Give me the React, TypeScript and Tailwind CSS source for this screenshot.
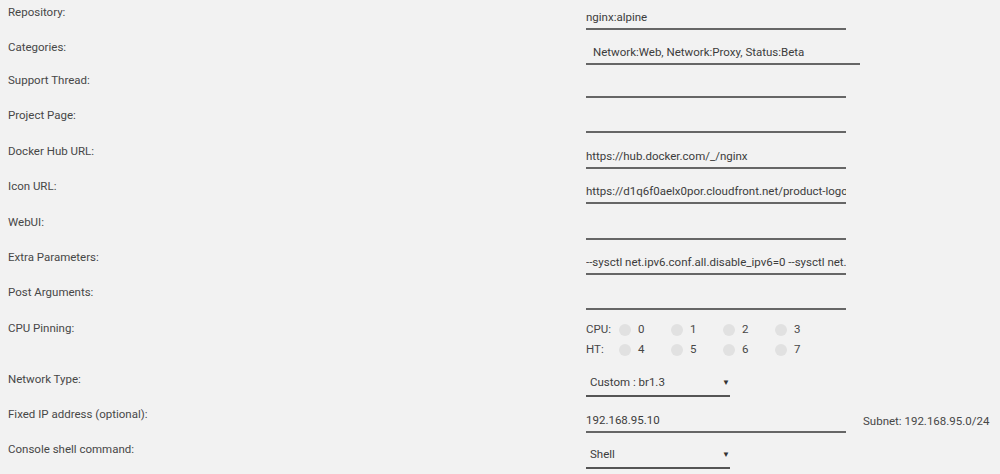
import type { ReactNode } from "react";

const font = { fontFamily: 'Roboto, "Noto Sans", sans-serif' };

// one label/value line of the template form
const Row = ({
  label,
  className,
  children,
}: {
  label: string;
  className: string;
  children?: ReactNode;
}) => (
  <div className={`flex ${className}`}>
    <div className="w-[586px] shrink-0 pl-[8px] pt-[4px] leading-[16px]">{label}</div>
    <div className="flex-1">{children}</div>
  </div>
);

const TextField = ({ value = "", wide = false }: { value?: string; wide?: boolean }) => (
  <input
    readOnly
    value={value}
    className={`block mt-[6px] h-[24px] p-0 bg-transparent border-0 border-b-2 border-[#666666] text-[#3c3c3c] text-[11.5px] outline-none ${
      wide ? "w-[274px] pl-[7px]" : "w-[260px]"
    }`}
    style={font}
  />
);

const SelectBox = ({ value }: { value: string }) => (
  <div className="flex items-center justify-between w-[144px] h-[26px] pl-[4px] pr-0 border-b-2 border-[#555555] text-[#3c3c3c]">
    <span>{value}</span>
    <span className="text-[8px] text-[#333333]">▼</span>
  </div>
);

const cpuRows = [
  { name: "CPU:", cores: [0, 1, 2, 3] },
  { name: "HT:", cores: [4, 5, 6, 7] },
];

export default function App() {
  return (
    <div className="min-h-screen w-full bg-[#f2f2f2] text-[#474747] text-[11.5px]" style={font}>
      <Row label="Repository:" className="h-[35px]">
        <TextField value="nginx:alpine" />
      </Row>
      <Row label="Categories:" className="h-[33px]">
        <TextField value="Network:Web, Network:Proxy, Status:Beta" wide />
      </Row>
      <Row label="Support Thread:" className="h-[35.4px]">
        <TextField />
      </Row>
      <Row label="Project Page:" className="h-[35.4px]">
        <TextField />
      </Row>
      <Row label="Docker Hub URL:" className="h-[35.4px]">
        <TextField value="https://hub.docker.com/_/nginx" />
      </Row>
      <Row label="Icon URL:" className="h-[35.4px]">
        <TextField value="https://d1q6f0aelx0por.cloudfront.net/product-logos/library-nginx-logo.png" />
      </Row>
      <Row label="WebUI:" className="h-[35.4px]">
        <TextField />
      </Row>
      <Row label="Extra Parameters:" className="h-[35.4px]">
        <TextField value="--sysctl net.ipv6.conf.all.disable_ipv6=0 --sysctl net.ipv6.conf.default.disable_ipv6=0" />
      </Row>
      <Row label="Post Arguments:" className="h-[35.4px]">
        <TextField />
      </Row>

      <Row label="CPU Pinning:" className="h-[51.2px]">
        <div className="pt-[4px]">
          {cpuRows.map((r) => (
            <div key={r.name} className="flex items-center h-[20px]">
              <span className="w-[33px]">{r.name}</span>
              {r.cores.map((c) => (
                <span key={c} className="flex items-center w-[52px]">
                  <span className="w-[12px] h-[12px] rounded-full bg-[#e1e1e1]" />
                  <span className="ml-[7px]">{c}</span>
                </span>
              ))}
            </div>
          ))}
        </div>
      </Row>

      <Row label="Network Type:" className="h-[35px]">
        <div className="pt-[4px]">
          <SelectBox value="Custom : br1.3" />
        </div>
      </Row>
      <Row label="Fixed IP address (optional):" className="h-[35px]">
        <div className="flex items-center">
          <input
            readOnly
            value="192.168.95.10"
            className="block mt-[7px] w-[260px] h-[24px] p-0 bg-transparent border-0 border-b-2 border-[#666666] text-[#3c3c3c] text-[11.5px] outline-none"
            style={font}
          />
          <span className="ml-[17px] mt-[8px]">Subnet: 192.168.95.0/24</span>
        </div>
      </Row>
      <Row label="Console shell command:" className="h-[37px]">
        <div className="pt-[6px]">
          <SelectBox value="Shell" />
        </div>
      </Row>
    </div>
  );
}
